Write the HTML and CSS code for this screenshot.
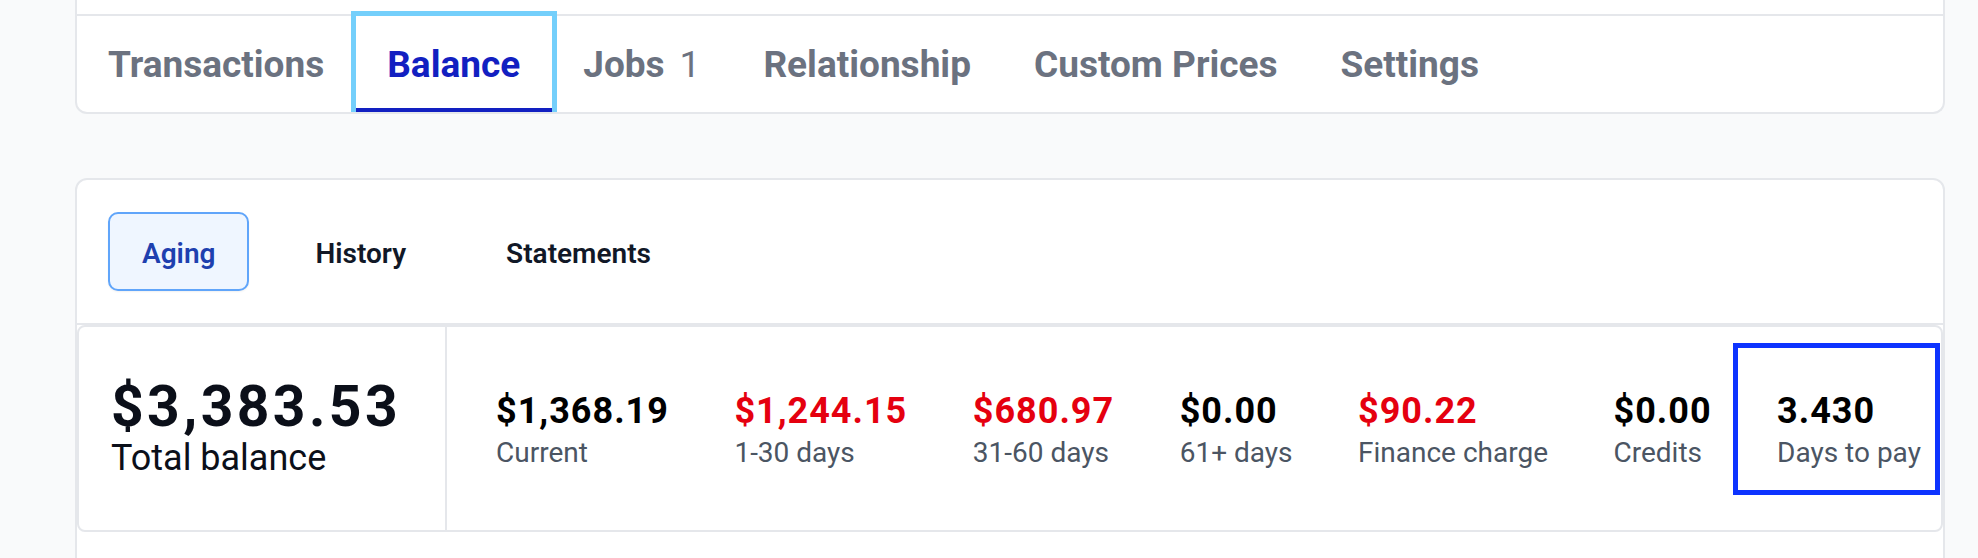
FILE: index.html
```html
<!DOCTYPE html>
<html lang="en">
<head>
<meta charset="utf-8">
<title>Balance</title>
<link rel="stylesheet" href="styles.css">
</head>
<body>
<div class="page">
  <div class="card nav-card">
    <div class="nav-top"></div>
    <nav class="tabs">
      <a class="tab">Transactions</a>
      <a class="tab active">Balance</a>
      <a class="tab">Jobs<span class="count">1</span></a>
      <a class="tab">Relationship</a>
      <a class="tab">Custom Prices</a>
      <a class="tab">Settings</a>
    </nav>
  </div>

  <div class="card balance-card">
    <div class="subtabs">
      <button class="subtab active">Aging</button>
      <button class="subtab">History</button>
      <button class="subtab">Statements</button>
    </div>
    <div class="stats">
      <div class="total">
        <div class="total-value">$3,383.53</div>
        <div class="total-label">Total balance</div>
      </div>
      <div class="aging">
        <div class="item"><div class="value">$1,368.19</div><div class="label">Current</div></div>
        <div class="item"><div class="value red">$1,244.15</div><div class="label">1-30 days</div></div>
        <div class="item"><div class="value red">$680.97</div><div class="label">31-60 days</div></div>
        <div class="item"><div class="value">$0.00</div><div class="label">61+ days</div></div>
        <div class="item"><div class="value red">$90.22</div><div class="label">Finance charge</div></div>
        <div class="item"><div class="value">$0.00</div><div class="label">Credits</div></div>
        <div class="item focused"><div class="value">3.430</div><div class="label">Days to pay</div></div>
      </div>
    </div>
  </div>
</div>
</body>
</html>
```

FILE: styles.css
```css
html, body {
  margin: 0;
  height: 100%;
  overflow: hidden;
  background: #f9fafb;
  font-family: Roboto, "Liberation Sans", Arial, sans-serif;
}

* { box-sizing: border-box; }

.page {
  padding: 0 33px 0 75px;
}

.card {
  background: #ffffff;
  border: 2px solid #e5e7eb;
}

.nav-card {
  border-top: none;
  border-radius: 0 0 12px 12px;
  overflow: hidden;
}

.nav-top {
  height: 14px;
}

.tabs {
  display: flex;
  height: 98px;
  border-top: 2px solid #e5e7eb;
}

.tab {
  display: flex;
  align-items: center;
  padding: 5px 32px 0 31px;
  border-bottom: 4px solid transparent;
  font-weight: 700;
  font-size: 37px;
  line-height: 44px;
  color: #6b7280;
  white-space: nowrap;
}

.tab.active {
  color: #1220c1;
  border-bottom-color: #1220c1;
  outline: 5px solid #74cffb;
}

.count {
  font-weight: 400;
  margin-left: 15px;
}

.balance-card {
  margin-top: 64px;
  border-radius: 12px 12px 0 0;
  padding-bottom: 120px;
}

.subtabs {
  display: flex;
  gap: 32px;
  padding: 32px 32px 32px 31px;
  border-bottom: 2px solid #e5e7eb;
}

.subtab {
  font-family: inherit;
  font-weight: 600;
  font-size: 28px;
  line-height: 40px;
  padding: 20px 32px 15px;
  border: 2px solid transparent;
  border-radius: 10px;
  background: transparent;
  color: #111827;
}

.subtab.active {
  background: #eff6ff;
  border-color: #60a5fa;
  color: #1e40af;
  box-shadow: 0 1px 2px rgba(0, 0, 0, 0.06);
}

.stats {
  display: flex;
  height: 207px;
  border: 2px solid #e5e7eb;
  border-radius: 8px;
}

.total {
  width: 368px;
  flex: none;
  border-right: 2px solid #e5e7eb;
  padding: 50px 0 0 32px;
  color: #0b0f19;
}

.total-value {
  font-weight: 700;
  font-size: 57px;
  line-height: 60px;
  letter-spacing: 3.4px;
}

.total-label {
  font-weight: 400;
  font-size: 36px;
  line-height: 40px;
  margin-top: 1px;
}

.aging {
  display: flex;
  align-items: flex-start;
  gap: 12.5px;
  padding: 21px 0 0 10px;
}

.item {
  padding: 41px 14px 17px 39px;
  white-space: nowrap;
}

.item.focused {
  outline: 5px solid #0d33ff;
}

.value {
  font-weight: 700;
  font-size: 36px;
  line-height: 44px;
  letter-spacing: 1px;
  color: #000000;
}

.value.red {
  color: #e5000f;
}

.label {
  font-weight: 400;
  font-size: 28px;
  line-height: 40px;
  color: #4b5563;
}
```
